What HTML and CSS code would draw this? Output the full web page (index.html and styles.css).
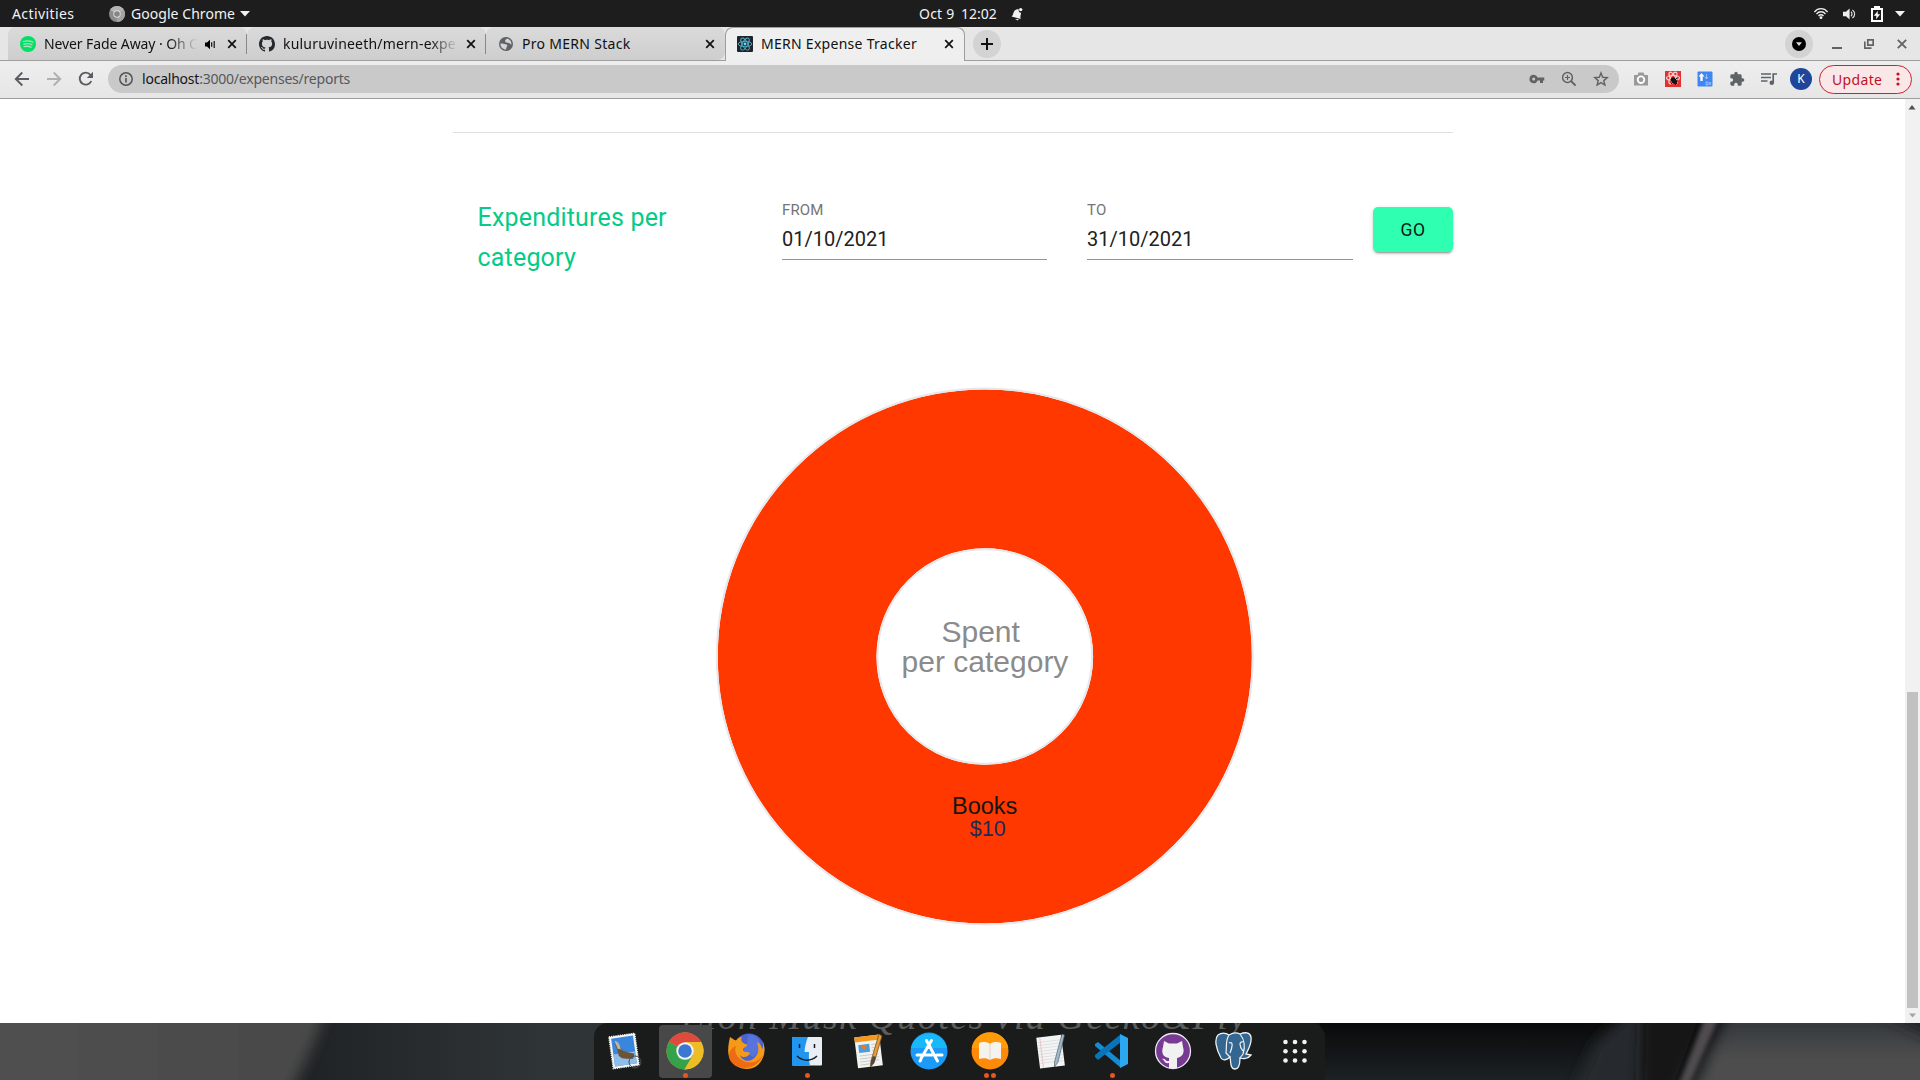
FILE: index.html
```html
<!DOCTYPE html>
<html lang="en">
<head>
<meta charset="utf-8">
<title>MERN Expense Tracker</title>
<link rel="stylesheet" href="styles.css">
</head>
<body>
<header class="topbar">
  <div class="top-left">
    <span class="activities">Activities</span>
    <svg class="app-icon" width="16" height="16" viewBox="0 0 16 16"><circle cx="8" cy="8" r="8" fill="#8c8c8c"/><path d="M8 8L1.1 4A8 8 0 0 1 14.9 4Z" fill="#b5b5b5"/><path d="M8 8L15 4A8 8 0 0 1 8 16Z" fill="#a3a3a3"/><circle cx="8" cy="8" r="3.7" fill="#ddd"/><circle cx="8" cy="8" r="2.8" fill="#858585"/></svg>
    <span class="app-name">Google Chrome</span>
    <svg width="10" height="6" viewBox="0 0 10 6"><path d="M0 0H10L5 5.4Z" fill="#f2f2f2"/></svg>
  </div>
  <div class="top-center">
    <span class="date">Oct 9</span><span class="clock">12:02</span>
    <svg width="12" height="14" viewBox="0 0 12 14"><path d="M0.5 9.5C2.5 8.5 2 5 4 3.3 5.5 2 7 2.2 8 2.6A2 2 0 0 0 10 5.6C10.2 8 8.7 9.5 9.8 12Z" fill="#f2f2f2"/><circle cx="9.7" cy="2.6" r="1.7" fill="#f2f2f2"/><path d="M4 12L7 13.4 7.6 12Z" fill="#f2f2f2"/></svg>
  </div>
  <div class="top-right">
    <svg width="14" height="11" viewBox="0 0 14 11" fill="none" stroke="#eee" stroke-width="1.3"><path d="M.4 4C4-.4 10-.4 13.6 4M2.5 6C5 3 9 3 11.5 6M4.5 8C6 6.3 8 6.3 9.5 8"/><circle cx="7" cy="9.6" r=".8" fill="#eee"/></svg>
    <svg width="13" height="12" viewBox="0 0 13 12"><path d="M0 3.8H3L6.6.6V11.4L3 8.2H0Z" fill="#eee"/><path d="M8 3.8C9.3 5 9.3 7 8 8.2M9.4 2C12.4 4 12.4 8 9.4 10" fill="none" stroke="#ddd" stroke-width="1.2"/></svg>
    <svg width="12" height="16" viewBox="0 0 12 16"><path d="M3 0H9V2H12V16H0V2H3Z" fill="#fff"/><path d="M2 4H10V14H2Z" fill="#1d1d1d"/><path d="M7 4.8L2.8 9.7H5.4L5 13.2 9.2 8.2H6.6Z" fill="#fff"/></svg>
    <svg width="10" height="6" viewBox="0 0 10 6"><path d="M0 0H10L5 5.4Z" fill="#f2f2f2"/></svg>
  </div>
</header>

<nav class="tabstrip">
  <div class="tab tab-first">
    <svg class="favicon" viewBox="0 0 16 16"><circle cx="8" cy="8" r="8" fill="#00e064"/><path d="M3.3 5.5C7 4.4 10.500 4.800 13 6.200M3.800 8.100C7 7.200 10 7.600 12 8.800M4.200 10.600C7 9.900 9 10.200 11 11.200" stroke="#b5ddc4" stroke-width="1.3" fill="none" stroke-linecap="round"/></svg>
    <span class="tab-title fade t-audio">Never Fade Away · Oh C</span>
    <svg class="audio" width="11" height="11" viewBox="0 0 11 11"><path d="M0 3.500H2L5 .8V10.200L2 7.500H0Z"/><path d="M6.700 3.200V7.800M9.200 2V9" stroke="#111" stroke-width="1.200"/></svg>
    <svg class="close" viewBox="0 0 10 10"><path d="M1.200 1.200L8.800 8.800M8.800 1.200L1.200 8.800"/></svg>
  </div>
  <div class="tab">
    <svg class="favicon" viewBox="0 0 16 16"><path fill="#24292f" d="M8 0C3.580 0 0 3.580 0 8c0 3.540 2.290 6.530 5.470 7.590.4.070.55-.17.55-.38 0-.19-.01-.82-.01-1.490-2.010.37-2.530-.49-2.690-.94-.09-.23-.48-.94-.82-1.130-.28-.15-.68-.52-.01-.53.63-.01 1.080.58 1.230.82.72 1.210 1.870.87 2.330.66.07-.52.28-.87.51-1.070-1.780-.2-3.640-.89-3.640-3.950 0-.87.31-1.590.82-2.150-.08-.2-.36-1.020.08-2.120 0 0 .67-.21 2.200.82.64-.18 1.320-.27 2-.27s1.360.09 2 .27c1.530-1.040 2.200-.82 2.200-.82.44 1.100.16 1.920.08 2.120.51.56.82 1.270.82 2.150 0 3.070-1.870 3.750-3.650 3.950.29.25.54.73.54 1.480 0 1.070-.01 1.930-.01 2.200 0 .21.15.46.55.38A8 8 0 0 0 16 8c0-4.420-3.580-8-8-8Z"/></svg>
    <span class="tab-title fade t-repo">kuluruvineeth/mern-expe</span>
    <svg class="close" viewBox="0 0 10 10"><path d="M1.200 1.200L8.800 8.800M8.800 1.200L1.200 8.800"/></svg>
  </div>
  <div class="tab tab-last">
    <svg class="favicon" viewBox="0 0 16 16"><circle cx="8" cy="8" r="7" fill="#5f6368"/><path d="M2.500 7.500C4 7.300 6 8 7.500 8.300 9.500 8.600 10 10 8.600 10.800L8 13.500C5 13.500 2.200 11 2.500 7.500ZM7.300 4C8.500 3 9 2.600 10.500 2.900 12.500 4 13.600 6 13.400 8.500 12 8.300 11.500 6.500 9.500 6.800 8 7 6.500 5.500 7.300 4Z" fill="#d4d4d4"/></svg>
    <span class="tab-title t-stack">Pro MERN Stack</span>
    <svg class="close" viewBox="0 0 10 10"><path d="M1.200 1.200L8.800 8.800M8.800 1.200L1.200 8.800"/></svg>
  </div>
  <div class="tab tab-active">
    <svg class="favicon" viewBox="0 0 16 16"><rect width="16" height="16" rx="1" fill="#20232a"/><g fill="none" stroke="#4fb3cc" stroke-width=".9"><ellipse cx="8" cy="8" rx="6.800" ry="2.700"/><ellipse cx="8" cy="8" rx="6.800" ry="2.700" transform="rotate(60 8 8)"/><ellipse cx="8" cy="8" rx="6.800" ry="2.700" transform="rotate(120 8 8)"/></g><circle cx="8" cy="8" r="1.400" fill="#61dafb"/></svg>
    <span class="tab-title t-active">MERN Expense Tracker</span>
    <svg class="close" viewBox="0 0 10 10"><path d="M1.200 1.200L8.800 8.800M8.800 1.200L1.200 8.800"/></svg>
  </div>
  <div class="round newtab"><svg width="12" height="12" viewBox="0 0 12 12"><path d="M6 0V12M0 6H12" stroke="#111" stroke-width="2"/></svg></div>
  <div class="window-controls">
    <div class="round"><svg width="14" height="14" viewBox="0 0 14 14"><circle cx="7" cy="7" r="7"/><path d="M4 5.300H10L7 9Z" fill="#ddd"/></svg></div>
    <svg width="10" height="10" viewBox="0 0 10 10"><path d="M0 9H10" stroke="#5f6368" stroke-width="2"/></svg>
    <svg width="10" height="10" viewBox="0 0 10 10"><path d="M3.800 .8H9.200V6.200H3.800ZM.8 2.500V9.200H7.500" stroke="#5f6368" stroke-width="1.700" fill="none"/></svg>
    <svg width="10" height="10" viewBox="0 0 10 10"><path d="M.8 .8L9.200 9.200M9.200 .8L.8 9.200" stroke="#5f6368" stroke-width="1.800"/></svg>
  </div>
</nav>

<div class="toolbar">
  <div class="nav-icons">
    <svg width="16" height="16" viewBox="0 0 16 16"><path d="M15 8H2M8.300 1.500L1.800 8 8.300 14.500" fill="none" stroke="#5a5d62" stroke-width="1.900"/></svg>
    <svg width="16" height="16" viewBox="0 0 16 16"><path d="M1 8H14M7.700 1.500L14.200 8 7.700 14.500" fill="none" stroke="#aeb0b2" stroke-width="1.900"/></svg>
    <svg width="16" height="16" viewBox="0 0 16 16"><path d="M13.300 10A6 6 0 1 1 12.400 3.800L14 5.400" fill="none" stroke="#5a5d62" stroke-width="1.900"/><path d="M15 .8V7H8.800Z" fill="#5a5d62"/></svg>
  </div>
  <div class="omnibox">
    <svg width="14" height="14" viewBox="0 0 14 14"><circle cx="7" cy="7" r="6.200" fill="none" stroke="#505357" stroke-width="1.500"/><path d="M7 6V10.500M7 3.300V4.900" stroke="#505357" stroke-width="1.600"/></svg>
    <span class="url"><b>localhost</b>:3000/expenses/reports</span>
    <div class="omni-icons">
      <svg width="16" height="16" viewBox="0 0 16 16"><path d="M4.700 3.800A4.200 4.200 0 1 0 8.600 9.500H11V12H14V9.500H15.300V6.500H8.600A4.200 4.200 0 0 0 4.700 3.800ZM4.700 6.500A1.500 1.500 0 1 1 4.700 9.500A1.500 1.500 0 1 1 4.700 6.500Z" fill="#5f6368" fill-rule="evenodd"/></svg>
      <svg width="16" height="16" viewBox="0 0 16 16" fill="none" stroke="#5f6368"><circle cx="6.500" cy="6.500" r="4.900" stroke-width="1.500"/><path d="M10 10L14.600 14.600" stroke-width="1.900"/><path d="M6.500 4V9M4 6.500H9" stroke-width="1.200"/></svg>
      <svg width="16" height="16" viewBox="0 0 16 16"><path d="M8 2L9.700 6.300 14.300 6.600 10.800 9.600 11.900 14 8 11.600 4.100 14 5.200 9.600 1.700 6.600 6.300 6.300Z" fill="none" stroke="#5f6368" stroke-width="1.400"/></svg>
    </div>
  </div>
  <div class="extensions">
    <svg width="16" height="16" viewBox="0 0 16 16"><path d="M1 4H4.500L5.500 1.500H10.500L11.500 4H15V14.500H1Z" fill="#999"/><circle cx="8" cy="8.700" r="3.300" fill="#999" stroke="#fff" stroke-width="1.800"/></svg>
    <svg width="16" height="16" viewBox="0 0 16 16"><rect width="16" height="16" fill="#e53030"/><g fill="none" stroke="#f9d0d0" stroke-width="1.200"><ellipse cx="8" cy="7" rx="6.500" ry="2.500"/><ellipse cx="8" cy="7" rx="6.500" ry="2.500" transform="rotate(60 8 7)"/><ellipse cx="8" cy="7" rx="6.500" ry="2.500" transform="rotate(120 8 7)"/></g><ellipse cx="9" cy="9.800" rx="2.500" ry="3.800" fill="#201010" transform="rotate(-35 9 9.800)"/><path d="M5 9L13 10M6 13L12 7M10 14L12 12" stroke="#201010" stroke-width=".9"/></svg>
    <svg width="16" height="16" viewBox="0 0 16 16"><rect x=".5" y=".5" width="15" height="15" rx="1" fill="#3f86f5"/><path d="M4.500 2L7.500 5.500H5.700V10H3.300V5.500H1.500Z" fill="#fff"/><path d="M9.500 3V8M8 6L9.500 8 11 6M9 11H11V14H9ZM12 11L14 14M14 11L12 14" stroke="#a9cbff" stroke-width=".8" fill="none"/></svg>
    <svg width="16" height="16" viewBox="0 0 24 24"><path fill="#5f6368" d="M20.500 11H19V7a2 2 0 0 0-2-2h-4V3.500a2.500 2.500 0 0 0-5 0V5H4a2 2 0 0 0-2 2v3.800h1.500a2.700 2.700 0 0 1 0 5.400H2V20a2 2 0 0 0 2 2h3.800v-1.500a2.700 2.700 0 0 1 5.400 0V22H17a2 2 0 0 0 2-2v-4h1.500a2.500 2.500 0 0 0 0-5Z"/></svg>
    <svg width="16" height="16" viewBox="0 0 16 16"><path d="M0 3H10M0 6.500H10M0 10H6.500M12.200 11.500V3H16" stroke="#5f6368" stroke-width="1.700" fill="none"/><circle cx="10.800" cy="11.800" r="2.300" fill="#5f6368"/></svg>
    <span class="avatar">K</span>
  </div>
  <div class="update"><span>Update</span><svg width="4" height="14" viewBox="0 0 4 14" fill="#c5101f"><circle cx="2" cy="2" r="1.600"/><circle cx="2" cy="7" r="1.600"/><circle cx="2" cy="12" r="1.600"/></svg></div>
</div>

<div class="viewport">
  <main class="page">
    <hr class="divider">
    <div class="filter">
      <h2 class="title">Expenditures per category</h2>
      <div class="field"><label>FROM</label><div class="value">01/10/2021</div></div>
      <div class="field"><label>TO</label><div class="value">31/10/2021</div></div>
      <button class="go">GO</button>
    </div>
    <svg class="chart" width="540" height="540" viewBox="0 0 540 540">
      <circle cx="269.800" cy="269.500" r="187.700" fill="none" stroke="#ff3800" stroke-width="158.700"/>
      <circle cx="269.800" cy="269.500" r="268" fill="none" stroke="#e6e9ec" stroke-width="2"/>
      <circle cx="269.800" cy="269.500" r="107.300" fill="none" stroke="#e6e9ec" stroke-width="2"/>
      <g text-anchor="middle">
        <text x="265.700" y="255" class="center-label">Spent</text>
        <text x="270" y="285" class="center-label">per category</text>
        <text x="269.700" y="427" class="slice-name">Books</text>
        <text x="272.700" y="448.500" class="slice-value">$10</text>
      </g>
    </svg>
  </main>
  <div class="scrollbar">
    <svg width="15" height="17" viewBox="0 0 15 17"><path d="M3.500 10.500H10.500L7 6Z" fill="#505050"/></svg>
    <div class="track"><div class="thumb"></div></div>
    <svg width="15" height="15" viewBox="0 0 15 15"><path d="M4 5.500H11L7.500 9.500Z" fill="#a3a3a3"/></svg>
  </div>
</div>

<footer class="desktop">
  <svg class="wallpaper" width="1920" height="57" viewBox="0 0 1920 57">
    <defs>
      <linearGradient id="w1" x1="0" x2="1"><stop offset="0" stop-color="#525252"/><stop offset="1" stop-color="#484848"/></linearGradient>
      <linearGradient id="w2" x1="0" x2="1"><stop offset="0" stop-color="#1e2123"/><stop offset=".1" stop-color="#272b2d"/><stop offset=".2" stop-color="#2f3437"/><stop offset=".5" stop-color="#2c3134"/><stop offset=".8" stop-color="#101112"/><stop offset="1" stop-color="#0a0a0a"/></linearGradient>
      <linearGradient id="w3" x1="0" y1="0" x2="0" y2="1"><stop offset="0" stop-color="#0a0a0b"/><stop offset="1" stop-color="#1b2124"/></linearGradient>
      <linearGradient id="w4" gradientUnits="userSpaceOnUse" x1="0" y1="0" x2="0" y2="57"><stop offset="0" stop-color="#34383b"/><stop offset=".6" stop-color="#4e4e4e"/></linearGradient>
      <filter id="b" x="-20%" y="-50%" width="140%" height="200%"><feGaussianBlur stdDeviation="7"/></filter>
      <filter id="s" x="-50%" y="-50%" width="200%" height="200%"><feGaussianBlur stdDeviation="2"/></filter>
    </defs>
    <rect width="1330" height="57" x="280" fill="url(#w2)"/>
    <rect x="1320" width="600" height="57" fill="url(#w3)"/>
    <path d="M-60 -40H336L312 24 276 100H-60Z" fill="url(#w1)" filter="url(#b)"/>
    <path d="M1640 -20L1595 20 1568 80H1650V-20Z" fill="#272b2e" filter="url(#b)"/>
    <path d="M1730 -20L1690 80H1960V-20Z" fill="url(#w4)" filter="url(#b)"/>
    <path d="M1642 -10H1705L1675 70H1640Z" fill="#131516" filter="url(#b)"/>
    <path d="M1705 -5H1719L1689 62H1679Z" fill="#504c50" filter="url(#s)"/>
    <path d="M1860 -20H1950V24Z" fill="#202428" filter="url(#b)"/>
  </svg>
  <div class="dock">
    <svg class="quote" width="731" height="57" viewBox="0 0 731 57"><text x="87" y="5.500" textLength="565">Elon Musk Quotes via Gecko&amp;Fly</text></svg>
    <div class="app"><svg viewBox="0 0 40 40"><g transform="rotate(-8 20 20)"><rect x="7" y="4" width="26" height="32" fill="#f4f4f0" stroke="#f4f4f0" stroke-width="1.500" stroke-dasharray="1.200 1"/><rect x="9" y="6" width="22" height="28" fill="#3a86dc"/><rect x="9" y="22" width="22" height="12" fill="#8fbdea"/><path d="M12 9C15 8 16 12 18 19L24 22 30 24 28 29 22 28 17 27 14 24C15 20 12 15 12 9Z" fill="#6d5436"/><path d="M12 9C15 8 17 13 17 18L14 17Z" fill="#b9b3a8"/></g><circle cx="31" cy="31" r="6" fill="none" stroke="#424c55"/></svg></div>
    <div class="app selected dot"><svg viewBox="0 0 40 40"><circle cx="20" cy="20" r="18.500" fill="#e8b923"/><path d="M20 20L4 10.700A18.500 18.500 0 0 1 36 10.700Z" fill="#df4a40"/><path d="M4 10.700A18.500 18.500 0 0 0 19.500 38.500L28 24 20 20Z" fill="#34a24b"/><path d="M20 11H36.200A18.500 18.500 0 0 1 19.500 38.500L28 24Z" fill="#edbd28"/><circle cx="20" cy="20" r="8.700" fill="#f4f4f4"/><circle cx="20" cy="20" r="6.800" fill="#3c78d2"/></svg></div>
    <div class="app"><svg viewBox="0 0 40 40"><circle cx="23" cy="18" r="15.500" fill="#4b63cf"/><path d="M22 4C31 3 37 11 34 19L27 26 17 20 21 14Z" fill="#5973dc"/><path d="M4 6C7 8 8 9 10 9.500 12 7 14 6 16 6 14 10 16 12 21 13.500 22 16 17 16 17 19 18 22 21 20 24 22 22 27 16 27 14 24 16 31 26 32 30 25 34 20 32 15 31 11 35 13 36 17 36 18 38 15 37 11 36 9 41 18 38 28 32 34 24 41 8 39 3 26 1 19 3 11 4 6Z" fill="#f59a18"/><path d="M3 26C6 40 30 42 37 24 32 32 22 34 14 28 10 25 8 20 10 15 5 17 3 21 3 26Z" fill="#ee6b13"/></svg></div>
    <div class="app dot"><svg viewBox="0 0 40 40"><rect x="5" y="6" width="30" height="28.500" rx="1" fill="#e9edf4"/><path d="M5 7A1 1 0 0 1 6 6H21C19 11 18 15 17.500 21H22C21.700 26 22 30 23 34.500H6A1 1 0 0 1 5 33.500Z" fill="#2096f0"/><path d="M12.500 13V17M27.500 13V17M10 25C16 30.500 24 30.500 30 25" stroke="#151b22" stroke-width="1.500" fill="none"/></svg></div>
    <div class="app"><svg viewBox="0 0 40 40"><g transform="rotate(-7 20 20)"><rect x="8" y="5" width="25" height="31" fill="#f2f2ee"/><rect x="8" y="5" width="25" height="5" fill="#f59820"/><rect x="11" y="13" width="11" height="8" fill="#489ce3"/><path d="M13 14H20L16.500 19Z" fill="#ed7d1a"/><path d="M24 14H30M24 17H30M24 20H30M11 24H30M11 27H30M11 30H30M11 33H24" stroke="#c4c4c4" stroke-width=".8"/></g><path d="M31 3L34 5 26 32 22.500 36 23 30Z" fill="#e99b3a" stroke="#6e4217" stroke-width=".7"/><path d="M25 25L28 26 26 32 22.500 36 23 30Z" fill="#4a4a4a"/></svg></div>
    <div class="app"><svg viewBox="0 0 40 40"><circle cx="20" cy="20" r="18.500" fill="#1b9af7"/><path d="M2 17A18.500 18.500 0 0 1 38 17Z" fill="#18b9fb"/><path d="M17.500 9.500L28.500 30M22.500 9.500L12 27.500M8 24H23M28 24H33M11 30L11.800 29" stroke="#fff" stroke-width="3" stroke-linecap="round" fill="none"/></svg></div>
    <div class="app dot two"><svg viewBox="0 0 40 40"><circle cx="20" cy="20" r="18.500" fill="#ff8a0a"/><path d="M1.700 17A18.500 18.500 0 0 1 38.300 17Z" fill="#ff9b08"/><path d="M20 13C17 10.500 12 10.500 9 12V28C13 26.500 17 27 20 29 23 27 27 26.500 31 28V12C28 10.500 23 10.500 20 13Z" fill="#f6f3ef"/><path d="M20 13V29" stroke="#ddd3c5"/></svg></div>
    <div class="app"><svg viewBox="0 0 40 40"><g transform="rotate(-7 20 20)"><rect x="7" y="5" width="25" height="31" fill="#f4f4f4"/><path d="M8 10H31M8 13H31M8 16H31M8 19H31M8 22H31M8 25H31M8 28H31M8 31H31" stroke="#d2d4d8" stroke-width=".6"/><path d="M10.500 5V36" stroke="#e1b0b0" stroke-width=".6"/></g><path d="M31 3L33.500 4 27 31 23.500 36 23.500 31Z" fill="#9dbacb" stroke="#46535c" stroke-width=".6"/></svg></div>
    <div class="app dot"><svg viewBox="0 0 40 40"><path d="M3 13L6 11 29 30V37L3 15Z" fill="#168bd2"/><path d="M3 26L6 29 29 11V3L3 24Z" fill="#0874ba"/><path d="M28 3L36 7V33L28 37Z" fill="#2ba8ef"/></svg></div>
    <div class="app"><svg viewBox="0 0 40 40"><circle cx="20" cy="20" r="17.500" fill="#783b94" stroke="#efe8f2" stroke-width="1.300"/><path d="M11 10L16 12.500H24L29 10 30 16C32 22 29 26 24 27V37H16V32C11 33 12 29 9 28 13 27 12 31 16 30V27C10 26 8 22 10 16Z" fill="#f1f1f1"/></svg></div>
    <div class="app"><svg viewBox="0 0 40 40"><path d="M7 27C2 18 0 8 4 4 8 1 12 2 15 4 20 1 24 2 26 3 31 1 36 1 37 6 38 13 34 19 32 23L37 24C34 28 29 28 26 27 26 33 25 38 21 38 16 38 17 31 16 26 13 29 9 30 7 27Z" fill="#336791" stroke="#f1f1f1" stroke-width="1.300"/><path d="M15 4C11 10 13 16 12 22L16 26M26 3C30 8 32 14 29 23L26 27M15 12C20 10 18 17 16 22M29 11C25 10 25 15 29 20" stroke="#f1f1f1" stroke-width="1.200" fill="none"/></svg></div>
    <div class="app"><svg viewBox="0 0 40 40" fill="#f2f2f2"><circle cx="10.500" cy="11" r="2.300"/><circle cx="20" cy="11" r="2.300"/><circle cx="29.500" cy="11" r="2.300"/><circle cx="10.500" cy="20.300" r="2.300"/><circle cx="20" cy="20.300" r="2.300"/><circle cx="29.500" cy="20.300" r="2.300"/><circle cx="10.500" cy="29.500" r="2.300"/><circle cx="20" cy="29.500" r="2.300"/><circle cx="29.500" cy="29.500" r="2.300"/></svg></div>
  </div>
</footer>
</body>
</html>
```
FILE: styles.css
```css
* { box-sizing: border-box; }
body { margin: 0; width: 1920px; height: 1080px; overflow: hidden; display: flex; flex-direction: column; background: #fff; font-family: "Noto Sans", "Open Sans", sans-serif; }
svg { display: block; flex: none; }
span { white-space: nowrap; }

/* GNOME top bar */
.topbar { height: 27px; flex: none; background: #1d1d1d; color: #f2f2f2; font-size: 14px; line-height: 26px; display: grid; grid-template-columns: 1fr auto 1fr; align-items: center; }
.top-left, .top-center, .top-right { display: flex; align-items: center; }
.top-left { padding-left: 12px; }
.activities { width: 97px; letter-spacing: .4px; }
.app-icon { margin-right: 6px; }
.app-name { width: 109px; letter-spacing: .05px; }
.top-center { padding-left: 21px; }
.date { width: 43px; letter-spacing: .2px; padding-left: 1px; }
.clock { width: 50px; letter-spacing: 0; }
.top-right { justify-content: flex-end; padding-right: 15px; }
.top-right svg:nth-child(1) { margin-right: 15px; }
.top-right svg:nth-child(2) { margin-right: 15px; }
.top-right svg:nth-child(3) { margin-right: 12px; }

/* Tabs */
.tabstrip { height: 34px; flex: none; display: flex; align-items: stretch; padding-left: 8px; background: #e6e6e6; box-shadow: inset 0 -1px #9e9e9e; }
.tab { width: 239px; height: 33px; display: flex; align-items: center; padding: 1px 10px 0 12px; background: linear-gradient(#dadada, #cecece); border-radius: 8px 8px 0 0; position: relative; }
.tab:not(.tab-active):not(.tab-last)::after { content: ""; position: absolute; right: 0; top: 7px; width: 1px; height: 20px; background: #888; }
.tab-last { border-radius: 8px 8px 8px 0; }
.favicon { width: 16px; height: 16px; margin-right: 8px; }
.tab-title { flex: 1; overflow: hidden; font-size: 14px; letter-spacing: -.1px; color: #111; line-height: 20px; margin-right: 8px; }
.t-repo { letter-spacing: .2px; }
.t-stack { letter-spacing: .3px; }
.t-active { letter-spacing: .28px; }
.fade { -webkit-mask-image: linear-gradient(90deg, #000 calc(100% - 28px), transparent); mask-image: linear-gradient(90deg, #000 calc(100% - 28px), transparent); }
.audio { margin-right: 11px; }
.close { width: 10px; height: 10px; fill: none; stroke: #111; stroke-width: 1.700; }
.tab-active { width: 240px; height: 34px; padding: 0 10px 1px 11px; background: #efefef; border: 1px solid #9e9e9e; border-bottom: 0; }
.round { width: 28px; height: 28px; border-radius: 50%; background: #d3d3d3; display: flex; align-items: center; justify-content: center; align-self: center; }
.newtab { margin-left: 8px; }
.window-controls { margin-left: auto; display: flex; align-items: center; padding-right: 13px; }
.window-controls .round { margin-right: 19px; }
.window-controls > svg + svg { margin-left: 22px; }
.window-controls > svg:last-child { margin-left: 23px; }

/* Toolbar */
.toolbar { height: 38px; flex: none; display: flex; align-items: center; padding-bottom: 1px; background: linear-gradient(#eee, #e6e6e6); border-bottom: 1px solid #9e9e9e; }
.nav-icons { display: flex; gap: 16px; width: 108px; padding-left: 14px; }
.omnibox { width: 1511px; height: 28px; border-radius: 14px; background: #c9c9c9; display: flex; align-items: center; padding: 0 10px 0 11px; }
.url { margin-left: 9px; font-size: 14px; line-height: 18px; padding-bottom: 1px; letter-spacing: -.22px; color: #55585c; }
.url b { font-weight: 400; color: #151515; }
.omni-icons { margin-left: auto; display: flex; gap: 16px; }
.extensions { display: flex; align-items: center; gap: 16px; margin-left: 14px; }
.avatar { width: 22px; height: 22px; margin-left: -3px; border-radius: 50%; background: #20469c; color: #fff; font-size: 12px; line-height: 22px; text-align: center; }
.update { margin-left: 7px; width: 93px; height: 29px; border: 1px solid #d0202c; border-radius: 15px; background: #fae8e8; color: #c5101f; display: flex; align-items: center; justify-content: space-between; padding: 0 11px 0 12px; font-size: 14px; letter-spacing: .35px; }

/* Page */
.viewport { flex: 1; display: flex; min-height: 0; background: #fff; }
.page { flex: 1; padding: 33px 452px 0 453px; }
.divider { height: 1px; margin: 0; border: 0; background: #e0e0e0; }
.filter { display: flex; align-items: flex-start; padding-top: 64px; height: 243px; font-family: Roboto, sans-serif; }
.title { margin: 0; width: 329px; padding: 1px 90px 0 24.5px; font-size: 25px; font-weight: 400; line-height: 40px; letter-spacing: .19px; color: #06cb87; }
.field { width: 265px; margin-right: 40px; border-bottom: 1px solid #949494; height: 63px; padding-top: 4px; }
.field + .field { width: 266px; margin-right: 20px; }
.field label { display: block; font-size: 15px; line-height: 18px; letter-spacing: .14px; color: #757575; }
.value { margin-top: 8px; font-size: 20px; line-height: 24px; letter-spacing: 0; color: #212121; }
.go { width: 80px; height: 45px; margin-top: 10px; padding: 1px 0 0; border: 0; border-radius: 5px; background: #2effb0; color: #0c1a14; font: 400 17.500px/44px Roboto, sans-serif; letter-spacing: .5px; box-shadow: 0 3px 1px -2px rgba(0,0,0,.2), 0 2px 2px rgba(0,0,0,.14), 0 1px 5px rgba(0,0,0,.12); }
.chart { margin: 11px 0 0 262px; font-family: "Liberation Sans", Arial, sans-serif; }
.center-label { font-size: 30px; fill: #8b8b8b; }
.slice-name { font-size: 23.500px; fill: #151515; }
.slice-value { font-size: 21.500px; fill: #1c2a5c; }
.scrollbar { width: 15px; background: #f1f1f1; display: flex; flex-direction: column; }
.track { flex: 1; padding: 576px 2px 0; }
.thumb { height: 316px; background: #c1c1c1; }

/* Desktop strip and dock */
.desktop { height: 57px; flex: none; position: relative; background: #111; padding-left: 594px; overflow: hidden; }
.wallpaper { position: absolute; left: 0; top: 0; }
.dock { position: relative; width: 731px; height: 57px; border-radius: 14px 14px 0 0; background: #1a1b1b; display: flex; justify-content: center; padding: 2px 0 0; gap: 8px; }
.quote { position: absolute; left: 0; top: 0; font: italic 38px "Liberation Serif", serif; fill: #5c5c5c; }
.app { width: 53px; height: 53px; border-radius: 4px; padding-top: 6px; position: relative; }
.app > svg { width: 40px; height: 40px; margin: 0 auto; }
.selected { background: #484848; }
.dot::after { content: ""; position: absolute; left: 24px; top: 48px; width: 5px; height: 5px; border-radius: 50%; background: #e95420; }
.two::after { left: 20px; box-shadow: 7px 0 #e95420; }
```
